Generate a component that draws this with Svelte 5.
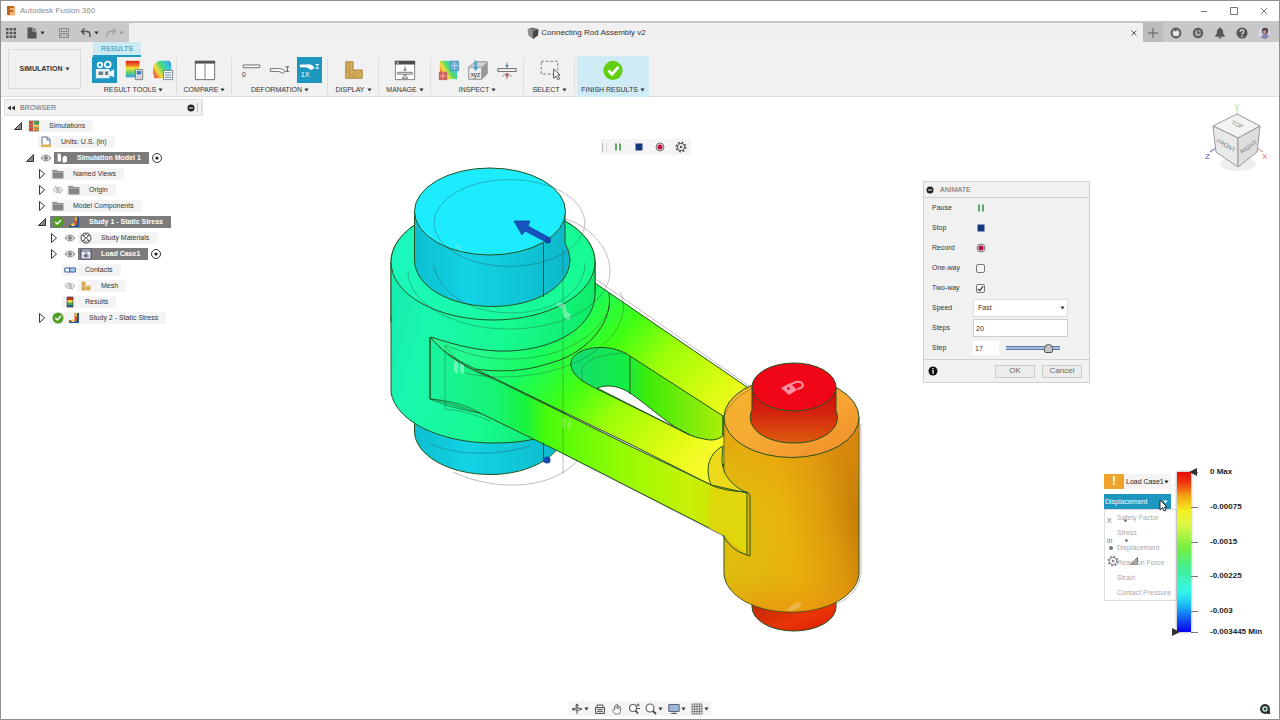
<script>
  const tree = [
    { level: 0, arrow: "open", icon: "stack", text: "Simulations" },
    { level: 1, icon: "ruler", text: "Units: U.S. (in)" },
    { level: 1, arrow: "open", eye: "on", icon: "model", text: "Simulation Model 1", active: true, radio: true },
    { level: 2, arrow: "closed", icon: "folder", text: "Named Views" },
    { level: 2, arrow: "closed", eye: "off", icon: "folder", text: "Origin" },
    { level: 2, arrow: "closed", icon: "folder", text: "Model Components" },
    { level: 2, arrow: "open", check: true, icon: "study", text: "Study 1 - Static Stress", active: true },
    { level: 3, arrow: "closed", eye: "on", icon: "material", text: "Study Materials" },
    { level: 3, arrow: "closed", eye: "on", icon: "load", text: "Load Case1", active: true, radio: true },
    { level: 3, icon: "contacts", text: "Contacts" },
    { level: 3, eye: "off", icon: "mesh", text: "Mesh" },
    { level: 3, icon: "results", text: "Results" },
    { level: 2, arrow: "closed", check: true, icon: "study", text: "Study 2 - Static Stress" }
  ];

  const groups = [
    { name: "RESULT TOOLS", tools: ["camera", "probe", "legend"], on: "camera" },
    { name: "COMPARE", tools: ["compare"] },
    { name: "DEFORMATION", tools: ["deform0", "deform", "deform1"], on: "deform1" },
    { name: "DISPLAY", tools: ["display"] },
    { name: "MANAGE", tools: ["manage"] },
    { name: "INSPECT", tools: ["inspect", "xyz", "reaction"] },
    { name: "SELECT", tools: ["select"] },
    { name: "FINISH RESULTS", tools: ["finish"], finish: true }
  ];

  const results = ["Safety Factor", "Stress", "Displacement", "Reaction Force", "Strain", "Contact Pressure"];

  const lowest = -0.003445;
  const ticks = [
    { value: 0, text: "0 Max" },
    { value: -0.00075, text: "-0.00075" },
    { value: -0.0015, text: "-0.0015" },
    { value: -0.00225, text: "-0.00225" },
    { value: -0.003, text: "-0.003" },
    { value: lowest, text: "-0.003445 Min" }
  ];

  const navTools = [
    { icon: "orbit", caret: true },
    { icon: "lookat" },
    { icon: "pan" },
    { icon: "zoom" },
    { icon: "fit", caret: true },
    { icon: "screen", caret: true },
    { icon: "gridview", caret: true }
  ];

  let playing = true;
  let oneWay = false;
  let twoWay = true;
  let speed = "Fast";
  let steps = 20;
  let step = 17;
  let result = "Displacement";

  function stop() {
    playing = false;
    step = 0;
  }
</script>

{#snippet caret()}
  <svg class="caret" viewBox="0 0 6 4" aria-hidden="true"><path d="M.5.3h5L3 3.7z" fill="currentColor" /></svg>
{/snippet}

{#snippet small(name)}
  <svg class="small" viewBox="0 0 12 12" aria-hidden="true">
    {#if name === "apps"}
      <path d="M1 1h2.600v2.600H1zm3.700 0h2.600v2.600H4.700zM8.400 1H11v2.600H8.400zM1 4.700h2.600v2.600H1zm3.700 0h2.600v2.600H4.700zm3.700 0H11v2.600H8.400zM1 8.400h2.600V11H1zm3.700 0h2.600V11H4.700zm3.700 0H11V11H8.400z" fill="#555" />
    {:else if name === "file"}
      <path d="M1.500.5h5v4h4v7h-9zM7.500.5l3 3h-3z" fill="#555" />
    {:else if name === "save"}
      <path d="M1.500 1.500h9v9h-9zM3.500 1.500v3h5v-3M3 10.500v-4h6v4M5 8.500h2" fill="none" stroke="#8c8c8c" />
    {:else if name === "undo"}
      <path d="M4.500 1.500 1.500 4.500l3 3M1.500 4.500H7q3 0 3 3.500v2" fill="none" stroke="#555" stroke-width="1.500" />
    {:else if name === "redo"}
      <path d="m7.500 1.500 3 3-3 3M10.500 4.500H5q-3 0-3 3.500v2" fill="none" stroke="#a0a0a0" stroke-width="1.300" />
    {:else if name === "cube"}
      <path d="m.5 2 5-1.500 6 1.500-5.500 2z" fill="#777" /><path d="M.5 2 6 4v8L1.500 8.500z" fill="#8b8b8b" /><path d="M11.500 2 6 4v8l5-3.500z" fill="#444" />
    {:else if name === "gear"}
      <circle cx="6" cy="6" r="4.600" fill="none" stroke="#555" stroke-width="1.800" stroke-dasharray="1.800 1.800" />
      <circle cx="6" cy="6" r="3.600" fill="none" stroke="#555" /><circle cx="6" cy="6" r="1.300" fill="#555" />
    {:else if name === "pause"}
      <path d="M4 2.500v7M8 2.500v7" stroke="#2f8f3c" stroke-width="1.500" />
    {:else if name === "stop"}
      <path d="M2.500 2.500h7v7h-7z" fill="#14387f" />
    {:else if name === "record"}
      <circle cx="6" cy="6" r="4" fill="#ddd" stroke="#777" /><circle cx="6" cy="6" r="2.500" fill="#c2083e" />
    {:else if name === "plus"}
      <path d="M6 1v10M1 6h10" stroke="#777" stroke-width="1.500" />
    {:else if name === "close"}
      <path d="m3.500 3.500 5 5m0-5-5 5" stroke="#555" />
    {:else if name === "extension"}
      <circle cx="6" cy="6" r="4.500" fill="none" stroke="#555" stroke-width="1.800" /><path d="M4 4.500h3l1.500 2-1 2H5L3.500 6z" fill="#eee" /><path d="m4 1 3 2.500-2 1z" fill="#555" />
    {:else if name === "clock"}
      <circle cx="6" cy="6" r="5.200" fill="#555" /><circle cx="6" cy="6" r="3.200" fill="#a8a8a8" /><path d="M6 3.500V6h2.500" fill="none" stroke="#444" stroke-width="1.200" />
    {:else if name === "bell"}
      <path d="M6 .5c.8 0 1 .5 1 1 2 .8 2 2.500 2.200 4.500.1 1.600.8 2.200 1.800 3v.8H1V9c1-.8 1.700-1.400 1.800-3C3 4 3 2.300 5 1.500c0-.5.2-1 1-1zM4.500 10.300h3q-.3 1.500-1.500 1.500t-1.500-1.500z" fill="#555" />
    {:else if name === "help"}
      <circle cx="6" cy="6" r="5.500" fill="#555" /><path d="M4.200 4.700c0-2.500 3.700-2.300 3.700-.2C7.900 6 6 5.800 6 7.500" fill="none" stroke="#eee" stroke-width="1.200" /><circle cx="6" cy="9.200" r=".8" fill="#eee" />
    {:else if name === "user"}
      <circle cx="6" cy="6" r="5.800" fill="#d8d5e6" /><circle cx="7" cy="4" r="3.200" fill="#554249" /><circle cx="6.500" cy="5" r="1.800" fill="#c39b91" /><path d="M3 11q1-4 4-4t4 2l-3 3z" fill="#8583a9" />
    {:else if name === "minus"}
      <circle cx="6" cy="6" r="3.500" fill="#222" /><path d="M4 6h4" stroke="#fff" />
    {:else if name === "back"}
      <path d="M6 3.500v5L2.500 6zm4 0v5L6.500 6z" fill="#333" />
    {:else if name === "info"}
      <circle cx="6" cy="6" r="4.500" fill="#111" /><path d="M6 5v3.700M6 3v1.200" stroke="#fff" stroke-width="1.300" />
    {:else if name === "open"}
      <path d="M9.500 2.500v7h-7z" fill="#888" stroke="#333" />
    {:else if name === "closed"}
      <path d="M3.500 1.500 8.500 6l-5 4.500z" fill="#fff" stroke="#333" />
    {:else if name === "on"}
      <path d="M1 6q5-6 10 0-5 6-10 0z" fill="#ddd" stroke="#888" /><circle cx="6" cy="6" r="1.800" fill="#777" />
    {:else if name === "off"}
      <path d="M1 6q5-5.500 10 0-5 5.500-10 0z" fill="#f5f5f5" stroke="#b5b5b5" /><circle cx="6" cy="6" r="1.500" fill="none" stroke="#b5b5b5" /><path d="m3 2 6 8" stroke="#b5b5b5" />
    {:else if name === "check"}
      <circle cx="6" cy="6" r="5.500" fill="#519d25" /><path d="m3.300 6 2 2 3.700-4" fill="none" stroke="#fff" stroke-width="1.500" />
    {:else if name === "radio"}
      <circle cx="6" cy="6" r="4.500" fill="#fff" stroke="#333" /><circle cx="6" cy="6" r="1.600" fill="#222" />
    {:else if name === "stack"}
      <path d="M1 1h4v3H1zm0 3.500h4v3H1z" fill="#d9482e" /><path d="M1 8h4v3H1z" fill="#d9482e" /><path d="M6 1h5v3H6z" fill="#4b9c49" /><path d="M6 4.500h5v3H6z" fill="#e7c843" /><path d="M6 8h5v3H6z" fill="#e28a37" /><path d="M1 4.200h10M1 7.700h10M1 1h10M1 11h10" stroke="#666" stroke-width=".7" />
    {:else if name === "ruler"}
      <path d="M2 1h5.500L10 3.500V10H2z" fill="#fff" stroke="#65718a" /><path d="M7 1v3h3" fill="none" stroke="#65718a" /><path d="M1 8.500h10V11H1z" fill="#d8b455" />
    {:else if name === "model"}
      <path d="M1 1h3l1.500 2v7H1zM6 5l3-2 2.500 2v5L8 11.500 6 10z" fill="#fff" stroke="#777" />
    {:else if name === "folder"}
      <path d="M.5 2h4l1 1h6v7.500H.5z" fill="#858585" /><path d="M1 4.200h10" stroke="#b4b4b4" />
    {:else if name === "study"}
      <path d="M6.500 1H11v10H1V8h5.500z" fill="#d85430" /><path d="M9 1v7.500l-2 1H1V11h10V1z" fill="#25579b" /><path d="M7 1h2v3.500H7z" fill="#e6b33c" /><path d="M3.500 7.500h3V10h-3z" fill="#f2df54" />
    {:else if name === "material"}
      <circle cx="6" cy="6" r="5" fill="#fff" stroke="#444" /><path d="m2.500 2.500 7 7m0-7-7 7" stroke="#555" stroke-width="1.200" /><path d="m6 2 2 2-2 2-2-2zm0 4 2 2-2 2-2-2z" fill="#fff" stroke="#666" stroke-width=".7" />
    {:else if name === "load"}
      <path d="M1 1h10v10H1z" fill="#eee" stroke="#455070" /><path d="M1 3h10M3 8h6M6 4v6M4.500 6.500 6 8l1.500-1.500" fill="none" stroke="#455070" />
    {:else if name === "contacts"}
      <path d="M.8 4h5v4h-5z" fill="#fff" stroke="#315fa5" /><path d="M5.800 4h5.500v4H5.800z" fill="#aed3ee" stroke="#315fa5" />
    {:else if name === "mesh"}
      <path d="M1.500 1.500h4v4h5v5h-9z" fill="#d3a84a" stroke="#f5e5ba" stroke-dasharray="1 1" /><path d="M1.500 6h9M6 5.500v5" stroke="#f2ddb1" stroke-width=".7" />
    {:else if name === "results"}
      <path d="M3 1h6v3H3z" fill="#c92b20" /><path d="M3 4h6v2.500H3z" fill="#f3d43c" /><path d="M3 6.500h6V9H3z" fill="#45a942" /><path d="M3 9h6v2H3z" fill="#2b57ad" /><path d="M3 1h6v10H3z" fill="none" stroke="#444" stroke-width=".7" />
    {:else if name === "orbit"}
      <path d="M6 1v10M1 6q5-3 10 0-5 3-8 .5" fill="none" stroke="#555" /><path d="M4 3h4L6 .5zM1 5l3 .5L2 8z" fill="#555" />
    {:else if name === "lookat"}
      <path d="M1.500 4.500h9v6h-9z" fill="#ddd" stroke="#555" /><path d="M3 4V2h6v2M3.500 6.500h5m-5 2h5" fill="none" stroke="#555" />
    {:else if name === "pan"}
      <path d="M4 11 1.500 7.500q0-1.500 2-.5V3q1-1 1.500 0V1.700q1-1 1.500 0V3q1-1 1.500 0v1q1.500-.8 1.500.3V8L8.500 11zM5 3v3m1.500-3v3M8 3.500v3" fill="#fff" stroke="#666" stroke-width=".8" />
    {:else if name === "zoom"}
      <circle cx="5" cy="5" r="3.500" fill="#fff" stroke="#666" stroke-width="1.200" /><path d="m7.500 7.500 2.500 3" stroke="#444" stroke-width="1.500" /><path d="M10 .5v3M8.500 2h3M9 5.500h3" stroke="#555" />
    {:else if name === "fit"}
      <circle cx="5" cy="5" r="4" fill="#fff" stroke="#666" stroke-width="1.200" /><path d="m8 8 3 3" stroke="#444" stroke-width="1.800" />
    {:else if name === "screen"}
      <path d="M.8 1.500h10.400v7H.8z" fill="#9cb6d8" stroke="#667" /><path d="M3 10.500h6M6 8.500v2" stroke="#667" />
    {:else if name === "gridview"}
      <path d="M1 1h10v10H1zM3.500 1v10M6 1v10M8.500 1v10M1 3.500h10M1 6h10M1 8.500h10" fill="#eee" stroke="#777" stroke-width=".9" />
    {/if}
  </svg>
{/snippet}

{#snippet tool(name)}
  <svg class="tool-icon" viewBox="0 0 24 24" aria-hidden="true">
    {#if name === "camera"}
      <circle cx="6.500" cy="6.500" r="2.500" fill="none" stroke="#fff" stroke-width="1.800" /><circle cx="15" cy="6" r="3.200" fill="none" stroke="#fff" stroke-width="1.800" />
      <path d="M2 11h15v3l5-3v9l-5-2v3H2z" fill="#e9f3f6" /><path d="M5 13.500h5v4H5zm7 0h3.500v4H12z" fill="#6c7e84" />
    {:else if name === "probe"}
      <rect x="3" y="2" width="15" height="18" fill="url(#rainbow)" />
      <path d="M13.500 11.500h8v11h-8z" fill="#eee" stroke="#777" /><path d="M15 13h5v4h-5z" fill="#397ac0" /><path d="M15 19h5m-5 2h5" stroke="#888" stroke-dasharray="1 1" />
    {:else if name === "legend"}
      <path d="M1 15Q0 5 8 2h11l2 3v10q-5 2-9 6H3z" fill="url(#patch)" /><path d="M12.500 12.500h10v10h-10z" fill="#fff" stroke="#71818d" /><path d="M14 15h7m-7 2.500h7M14 20h7" stroke="#5f83a0" />
    {:else if name === "compare"}
      <path d="M1.500 2.500h21v20h-21z" fill="#fff" stroke="#666" /><path d="M1 2h22v3H1z" fill="#555" /><path d="M12 4v18" stroke="#777" />
    {:else if name === "deform0"}
      <path d="M3.500 6.500h18v3h-18z" fill="#fff" stroke="#666" /><text x="2" y="20" font-size="8" fill="#444">0</text>
    {:else if name === "deform"}
      <path d="M1.500 10.500h6q7-1 10 3l-3 2q-2-2-6-2h-7z" fill="#fff" stroke="#666" /><path d="M18 8.500h4m-4 5h4m-2-5v5" stroke="#555" />
    {:else if name === "deform1"}
      <path d="M2 6h7q7-1 9 4l-4 2q-3-3-6-3H2z" fill="#fff" /><path d="M19 6h4m-4 4h4m-2-4v4" stroke="#fff" /><text x="3" y="20" font-size="8" fill="#fff">1X</text>
    {:else if name === "display"}
      <path d="M3 3h8v9h10v9H3z" fill="#d4ac5b" stroke="#a88137" /><path d="M3 12h9v9M7 3v9m0 0v9M3 12l9 9 9-9" fill="none" stroke="#b58c40" stroke-width=".7" />
    {:else if name === "manage"}
      <path d="M1.500 2.500h21v20h-21z" fill="#fff" stroke="#777" /><path d="M1 2h22v4H1z" fill="#4d4d4d" /><path d="M3 3h2v2H3z" fill="#ccc" /><path d="M4 14.500h16v2H4z" fill="#fff" stroke="#666" /><path d="M12 8v5m-1.500-2 1.500 2 1.500-2M12 17l-3 4h6z" fill="none" stroke="#666" />
    {:else if name === "inspect"}
      <path d="M2 2h19v20H2z" fill="url(#patch)" /><path d="M13.500 2.500h9v10h-9z" fill="#69b0d5" stroke="#4e91bb" /><path d="M1.500 14.500h8v8h-8z" fill="#da5c58" stroke="#a95b58" /><path d="M18 2v10M13.500 7h9M5.500 14.500v8M1.500 18.500h8" stroke="#fff" stroke-width=".5" />
    {:else if name === "xyz"}
      <path d="m2 9 7-6h13v13l-6 6H2z" fill="#d3d3d3" stroke="#888" /><path d="M2 9h14v13H2z" fill="#eee" stroke="#999" /><path d="m16 9 6-6v13l-6 6z" fill="#999" /><path d="M8 2h3v7h2l-3.500 4L6 9h2z" fill="#55a8ca" /><text x="4" y="20" font-size="7" fill="#333">xyz</text>
    {:else if name === "reaction"}
      <path d="M2 10.500h20v3H2z" fill="#fff" stroke="#555" /><path d="M12 4v5" stroke="#477f99" /><path d="m10 6.500 2 3 2-3z" fill="#477f99" /><path d="M12 22v-5m-5 2q5-6 10 0" fill="none" stroke="#777" /><path d="m10 19 2-4 2 4z" fill="#c34b51" />
    {:else if name === "select"}
      <path d="M2.500 2.500h18v14h-18z" fill="none" stroke="#528267" stroke-dasharray="3 2" /><path d="M16 11v10l2.500-2.500 2 4 2-1-2-4H23z" fill="#fff" stroke="#444" />
    {:else if name === "finish"}
      <circle cx="12" cy="12.500" r="10.500" fill="#62cf12" /><path d="m7 12.500 4 4 7-8" fill="none" stroke="#fff" stroke-width="3" />
    {/if}
  </svg>
{/snippet}

<div class="app">
  <header class="titlebar">
    <svg class="logo" viewBox="0 0 10 10" aria-hidden="true"><path d="M2 .5h7v9H2z" fill="#f4ae76" /><path d="M1 0h7v2H4v2h3v2H4v3H1z" fill="#b9651c" /></svg>
    <span>Autodesk Fusion 360</span>
    <div class="window-buttons">
      <button aria-label="Minimize"><svg class="small" viewBox="0 0 12 12"><path d="M3 6.500h6" stroke="#777" /></svg></button>
      <button aria-label="Maximize"><svg class="small" viewBox="0 0 12 12"><path d="M2.500 2.500h7v7h-7z" fill="none" stroke="#777" /></svg></button>
      <button aria-label="Close"><svg class="small" viewBox="0 0 12 12"><path d="m3 3 6 6m0-6-6 6" stroke="#777" /></svg></button>
    </div>
  </header>

  <div class="tabbar">
    <div class="quick">
      <button aria-label="Data panel">{@render small("apps")}</button>
      <button aria-label="File">{@render small("file")}{@render caret()}</button>
      <button aria-label="Save">{@render small("save")}</button>
      <button aria-label="Undo">{@render small("undo")}{@render caret()}</button>
      <button aria-label="Redo" class="faded">{@render small("redo")}{@render caret()}</button>
    </div>
    <div class="document">
      <div class="document-name">{@render small("cube")}<span>Connecting Rod Assembly v2</span></div>
      <button aria-label="Close document">{@render small("close")}</button>
    </div>
    <div class="account">
      <button class="new" aria-label="New document">{@render small("plus")}</button>
      <button aria-label="Extensions">{@render small("extension")}</button>
      <button aria-label="Job status">{@render small("clock")}</button>
      <button aria-label="Notifications">{@render small("bell")}</button>
      <button aria-label="Help">{@render small("help")}</button>
      <button aria-label="Profile">{@render small("user")}</button>
    </div>
  </div>

  <nav class="ribbon">
    <button class="workspace">SIMULATION {@render caret()}</button>
    {#each groups as group, index}
      <div class="group" class:finish={group.finish}>
        {#if index === 0}
          <button class="results-tab">RESULTS</button>
        {/if}
        <div class="tools">
          {#each group.tools as name}
            <button class:on={group.on === name} aria-label={name}>{@render tool(name)}</button>
          {/each}
        </div>
        <button class="group-name">{group.name} {@render caret()}</button>
      </div>
    {/each}
  </nav>

  <main>
    <svg class="model" viewBox="0 97 1280 623" role="img" aria-label="Connecting rod displacement">
      <defs>
        <linearGradient id="rainbow" x1="0" y1="0" x2="0" y2="1">
          <stop offset="0" stop-color="#d91e18" /><stop offset=".25" stop-color="#ef6b29" /><stop offset=".45" stop-color="#f8e43b" /><stop offset=".7" stop-color="#5fd46d" /><stop offset="1" stop-color="#3d9be0" />
        </linearGradient>
        <linearGradient id="patch" x1="0" y1=".8" x2="1" y2=".2">
          <stop offset="0" stop-color="#e84435" /><stop offset=".3" stop-color="#f2de3d" /><stop offset=".55" stop-color="#52d96b" /><stop offset=".8" stop-color="#36cbd8" /><stop offset="1" stop-color="#4198cf" />
        </linearGradient>
        <linearGradient id="body" gradientUnits="userSpaceOnUse" x1="391" y1="300" x2="600" y2="360">
          <stop offset="0" stop-color="#16edb0" /><stop offset=".2" stop-color="#19f7ae" /><stop offset=".55" stop-color="#16fa91" /><stop offset="1" stop-color="#0ee85c" />
        </linearGradient>
        <linearGradient id="ring" gradientUnits="userSpaceOnUse" x1="391" y1="230" x2="595" y2="300">
          <stop offset="0" stop-color="#1cf8c0" /><stop offset="1" stop-color="#16fc8d" />
        </linearGradient>
        <linearGradient id="pin" gradientUnits="userSpaceOnUse" x1="414" y1="0" x2="570" y2="0">
          <stop offset="0" stop-color="#0cbfd1" /><stop offset=".35" stop-color="#12d3e4" /><stop offset="1" stop-color="#0cb8c9" />
        </linearGradient>
        <linearGradient id="web" gradientUnits="userSpaceOnUse" x1="500" y1="326" x2="680" y2="484">
          <stop offset="0" stop-color="#23fb91" /><stop offset=".2" stop-color="#18fc62" /><stop offset=".4" stop-color="#3dff14" /><stop offset=".6" stop-color="#9cff08" /><stop offset=".85" stop-color="#dcfc10" /><stop offset="1" stop-color="#f6fa28" />
        </linearGradient>
        <linearGradient id="front" gradientUnits="userSpaceOnUse" x1="430" y1="0" x2="750" y2="0">
          <stop offset="0" stop-color="#18f49f" /><stop offset=".2" stop-color="#16f375" /><stop offset=".3" stop-color="#16f43e" /><stop offset=".36" stop-color="#47fb0b" /><stop offset=".6" stop-color="#93fc02" /><stop offset=".8" stop-color="#c6f206" /><stop offset="1" stop-color="#dfd506" />
        </linearGradient>
        <linearGradient id="wall" gradientUnits="userSpaceOnUse" x1="571" y1="0" x2="723" y2="0">
          <stop offset="0" stop-color="#14dc73" /><stop offset=".35" stop-color="#13ed46" /><stop offset=".5" stop-color="#3ceb09" /><stop offset="1" stop-color="#abee08" />
        </linearGradient>
        <linearGradient id="barrel" gradientUnits="userSpaceOnUse" x1="724" y1="560" x2="859" y2="530">
          <stop offset="0" stop-color="#dcc20c" /><stop offset=".5" stop-color="#e8b30b" /><stop offset=".8" stop-color="#dc9a0c" /><stop offset="1" stop-color="#c97d08" />
        </linearGradient>
        <linearGradient id="barrel-shade" x1="0" y1="0" x2="0" y2="1">
          <stop offset="0" stop-color="#e88914" stop-opacity=".6" /><stop offset=".5" stop-color="#e6b010" stop-opacity="0" /><stop offset=".8" stop-color="#e89410" stop-opacity=".1" /><stop offset="1" stop-color="#ec8610" stop-opacity=".6" />
        </linearGradient>
        <linearGradient id="collar" x1="0" y1="0" x2="1" y2="1">
          <stop offset="0" stop-color="#f3b52a" /><stop offset=".5" stop-color="#f6aa33" /><stop offset="1" stop-color="#f08b2b" />
        </linearGradient>
        <linearGradient id="redpin" x1="0" y1="0" x2="0" y2="1">
          <stop offset="0" stop-color="#cf0810" /><stop offset=".45" stop-color="#d4220e" /><stop offset="1" stop-color="#dc5c0d" />
        </linearGradient>
        <linearGradient id="redfoot" x1="0" y1="0" x2="1" y2="1">
          <stop offset="0" stop-color="#bd2708" /><stop offset=".6" stop-color="#ea3507" /><stop offset="1" stop-color="#d81505" />
        </linearGradient>
      </defs>

      <g class="edge">
        <!-- large pin, lower end -->
        <path d="M414.500 422v9c0 24 34 43.500 75.500 43.500 28 0 53-9 66-24v-30z" fill="url(#pin)" />
        <!-- large eye -->
        <path d="M391 262v130c4 29 49 51 102 51 15 0 29-1 42-4l60-50V262c0-32-46-58-102-58s-102 26-102 58z" fill="url(#body)" />
        <!-- web between the eyes -->
        <path d="M595 283 747 387 760 420 723 465 747 492 711 485 630 444 475 369C446 355 437 346 430 337c28 7 55 14 75 14 52-1 92-24 90-68z" fill="url(#web)" />
        <path d="M430 337c24 27 45 34 65 42l133 66 83 40c12 6 24 7 36 8v62l-24-20-163-83-80-39c-17-4-32-12-50-14z" fill="url(#front)" />
        <path d="M430 399c17 1 38 6 50 14-17-3-34-7-50-14z" fill="#10cf78" opacity=".6" />
        <path d="M475 369c20 3 49 3 72-5 35-8 67-38 62-71" fill="none" />
        <!-- slot -->
        <path d="M571 366c-2-11 13-19 31-18.500 11 .5 19 2.500 28 8.500l93 60v20q-8 6-19 3-7-1-14-4l-93-46c-14-7-24-13-26-23z" fill="url(#wall)" />
        <path d="M597 388c11-4 22-2 33 5 22 15 39 33 60 42z" fill="#fff" />
        <path d="M630 356v38M723 415v21" />
        <!-- large eye, raised boss -->
        <path d="M391 262c0 32 46 58 102 58s102-26 102-58v34c-3 32-41 56-90 56-27-1-53-6-75-15l-39-20z" fill="url(#body)" stroke="none" />
        <path d="M391 262v60" />
        <path d="M431 337c27 9 52 15 78 14 48-2 87-25 86-59v-30" fill="none" />
        <path d="M430 337v62" />
        <ellipse cx="493" cy="262" rx="102" ry="58" fill="url(#ring)" />
        <path d="M414.500 212v48c0 26 35 46.500 78 46.500S570 286 570 260q0-8-5-17v-31z" fill="url(#pin)" />
        <ellipse cx="490" cy="211.500" rx="75.500" ry="43.500" fill="#1cecfd" />
        <path d="M543.500 243v54M543.500 443v19" stroke="#084d70" />

        <!-- small pin and eye -->
        <path d="M752 600v7a42 24 0 0 0 84 0v-7z" fill="url(#redfoot)" />
        <path d="M724 417v157c2 22 31 38 67 38s66-16 68-38V417z" fill="url(#barrel)" />
        <path d="M724 417v157c2 22 31 38 67 38s66-16 68-38V417z" fill="url(#barrel-shade)" stroke="none" />
        <ellipse cx="791.500" cy="417.500" rx="67.500" ry="40" fill="url(#collar)" />
        <path d="M752 387v23c-8 17 12 33 42 33s49-16 42-32v-24z" fill="url(#redpin)" />
        <ellipse cx="794" cy="387" rx="42" ry="24" fill="#f00617" />
        <path d="M722 446v14c0 15 10 26 25 33v62l-24-20-14-7 2-43z" fill="#dfd70b" stroke="none" />
        <path d="M723 446c-17 9-17 26-12 39l36 8c-18-9-25-20-25-35z" fill="#ecd91a" />
        <path d="M711 485q12 6 36 7M747 492v63q-17-5-24-20M747 492l3 3v61l-3-1" fill="none" />
      </g>

      <!-- undeformed outline -->
      <g class="ghost">
        <ellipse cx="509.500" cy="223" rx="75.500" ry="43.500" />
        <path d="M408 271c0 32 45 58 101 58s101-26 101-58c0-25-24-47-45-52" />
        <path d="M434 266c5 27 36 47 77 47 45 0 74-23 74-50M563 249v225M445 345v64q24 2 45 12M445 345c25 10 40 14 65 14 48 0 88-20 100-53M465 373c35 8 75 3 102-7 45-17 65-50 53-74" />
        <path d="M430 444c30 12 65 12 100 2M453 472c41 19 96 19 124-11" />
        <path d="m597 280 152 106M562 453l163 84M445 345c11 17 25 25 52 36l135 66M582 382v-14q8-14 45-15M723 418q8-19 28-29M861 424v150q-2 19-24 30" />
      </g>

      <g fill="#fff" opacity=".5">
        <path d="m557 302 8 2 2 8 4 2-2 7-6-5-1-8-5-2zM454 360l4 2v12l-4-3zm6 3 4 2v9l-4-2z" opacity=".7" />
        <path d="m450 238 5 3v6l7 6v-7l-3-1" opacity=".25" />
        <path d="m562 417 3 2v10l-3-2zm5 2 4 2v9h-4z" opacity=".35" />
        <path d="m786 610 9-7 7-1-3 6-8 3z" opacity=".5" />
      </g>
      <!-- fixed constraint lock -->
      <path d="m781 388 9-5 7 7-8 5z" fill="#ff8fa0" />
      <path d="m791 384 5-2q6-1 7 3 0 3-6 4" fill="none" stroke="#ff8fa0" stroke-width="2" />
      <circle cx="788.500" cy="388.500" r="1.200" fill="#b8001a" />

      <path d="m514 221 16 0-2 5 22 12-2 5-23-12-3 4z" fill="#1752bd" stroke="#103d91" stroke-width=".7" />
      <ellipse cx="548" cy="240.500" rx="3" ry="3" fill="#1245a8" /><circle cx="547" cy="460" r="3.500" fill="#1747b0" />
    </svg>

    <aside class="browser">
      <div class="browser-head">
        <button aria-label="Collapse browser">{@render small("back")}</button>
        <span>BROWSER</span>
        <button aria-label="Browser options">{@render small("minus")}</button>
        <i class="grip"></i>
      </div>
      <ul>
        {#each tree as row}
          <li class="level{row.level}">
            <span class="slot">{#if row.arrow}{@render small(row.arrow)}{/if}</span>
            {#if row.eye}<span class="slot">{@render small(row.eye)}</span>{/if}
            <span class="node" class:active={row.active}>
              {#if row.check}<span class="slot">{@render small("check")}</span>{/if}
              <span class="slot">{@render small(row.icon)}</span>
              <span class="node-text">{row.text}</span>
            </span>
            {#if row.radio}{@render small("radio")}{/if}
          </li>
        {/each}
      </ul>
    </aside>

    <div class="playback">
      <i class="grip"></i>
      <button aria-label="Pause" on:click={() => (playing = !playing)}>{@render small("pause")}</button>
      <button aria-label="Stop" on:click={stop}>{@render small("stop")}</button>
      <button aria-label="Record">{@render small("record")}</button>
      <button aria-label="Settings">{@render small("gear")}</button>
    </div>

    <svg class="viewcube" viewBox="1200 97 75 85" role="img" aria-label="View cube">
      <ellipse cx="1238" cy="164" rx="18" ry="7" fill="#ddd" opacity=".5" />
      <path d="M1237 106v9" stroke="#a5e6a5" /><path d="m1216 148-6 4" stroke="#5555b5" /><path d="m1257 148 6 4" stroke="#d88" />
      <g stroke="#999" stroke-linejoin="round">
        <path d="m1237 114 23 12-22 12-25-12z" fill="#f3f3f3" />
        <path d="m1213 126 25 12v29l-22-15z" fill="#e9e9e9" />
        <path d="m1260 126-22 12v29l19-15z" fill="#dedede" />
      </g>
      <text class="face" transform="translate(1231 124) rotate(24)">TOP</text>
      <text class="face" transform="translate(1216 142) rotate(30)">FRONT</text>
      <text class="face" transform="translate(1242 154) rotate(-34)">RIGHT</text>
      <text class="axis" x="1205" y="159" fill="#5555c0">Z</text>
      <text class="axis" x="1262" y="159" fill="#d66">X</text>
      <text class="axis" x="1234" y="109" fill="#a5e6a5">Y</text>
    </svg>

    <section class="animate">
      <h2>{@render small("minus")}ANIMATE</h2>
      <div class="fields">
        <label for="pause">Pause</label>
        <button id="pause" on:click={() => (playing = !playing)}>{@render small("pause")}</button>
        <label for="stop">Stop</label>
        <button id="stop" on:click={stop}>{@render small("stop")}</button>
        <label for="record">Record</label>
        <button id="record">{@render small("record")}</button>
        <label for="one-way">One-way</label>
        <input id="one-way" type="checkbox" bind:checked={oneWay} />
        <label for="two-way">Two-way</label>
        <input id="two-way" type="checkbox" bind:checked={twoWay} />
        <label for="speed">Speed</label>
        <div class="select">
          <select id="speed" bind:value={speed}>
            <option>Slow</option>
            <option>Normal</option>
            <option>Fast</option>
          </select>
          {@render caret()}
        </div>
        <label for="steps">Steps</label>
        <input id="steps" class="steps" bind:value={steps} />
        <label for="step">Step</label>
        <div class="step">
          <input id="step" bind:value={step} />
          <input type="range" min="0" max={steps} bind:value={step} aria-label="Step slider" />
        </div>
      </div>
      <footer>
        {@render small("info")}
        <button>OK</button>
        <button>Cancel</button>
      </footer>
    </section>

    <div class="legend">
      <div class="legend-left">
        <div class="case">
          <span class="warn">!</span>
          <select aria-label="Load case"><option>Load Case1</option></select>
          {@render caret()}
        </div>
        <div class="quantity">
          <select bind:value={result} aria-label="Result">
            {#each results as name}
              <option>{name}</option>
            {/each}
          </select>
          {@render caret()}
          <svg class="cursor" viewBox="0 0 9 13" aria-hidden="true"><path d="M1 1v10l2.500-2.500L5 12l2-1-1.500-3H8z" fill="#fff" stroke="#222" /></svg>
        </div>
        <div class="options">
          <div class="under">
            <div><select aria-label="Direction"><option>X</option></select>{@render caret()}</div>
            <div><select aria-label="Unit"><option>in</option></select>{@render caret()}</div>
            <div>{@render small("gear")}{@render small("open")}</div>
          </div>
          <ul>
            {#each results as name}
              <li class:chosen={name === result}>{name}</li>
            {/each}
          </ul>
        </div>
      </div>
      <div class="scale">
        <div class="bar"></div>
        {#each ticks as tick}
          <span class="tick" style="top: {(tick.value / lowest) * 100}%">{tick.text}</span>
        {/each}
        <i class="max"></i>
        <i class="min"></i>
      </div>
    </div>

    <div class="navbar">
      {#each navTools as item}
        <button aria-label={item.icon}>{@render small(item.icon)}{#if item.caret}{@render caret()}{/if}</button>
      {/each}
    </div>
    <button class="assistant" aria-label="Assistant">
      <svg class="small" viewBox="0 0 12 12"><circle cx="6" cy="6" r="5" fill="#333" /><circle cx="6" cy="6" r="2" fill="none" stroke="#bdf0e2" stroke-width="1.300" /><path d="M8 8h3v3H8z" fill="#333" /></svg>
    </button>
  </main>
</div>

<style>
  :global(body) {
    background: #fff;
  }
  .app {
    display: flex;
    flex-direction: column;
    min-height: 100vh;
    position: relative;
    font-family: "Liberation Sans", Arial, sans-serif;
    font-size: 7px;
    line-height: 10px;
    color: #333;
  }
  .app::after {
    content: "";
    position: absolute;
    inset: 0;
    border: 1px solid #909090;
    pointer-events: none;
  }
  button,
  select,
  input {
    box-sizing: border-box;
    margin: 0;
    padding: 0;
    border: none;
    background: none;
    font: inherit;
    color: inherit;
  }
  button {
    display: flex;
    align-items: center;
    justify-content: center;
  }
  select {
    appearance: none;
  }
  ul {
    margin: 0;
    padding: 0;
    list-style: none;
  }
  svg {
    flex: none;
  }
  .small {
    width: 12px;
    height: 12px;
  }
  .caret {
    width: 5px;
    height: 4px;
    margin-left: 2px;
  }
  .grip {
    width: 3px;
    height: 9px;
    border-left: 1px solid #bbb;
    border-right: 1px solid #ddd;
  }

  .titlebar {
    display: flex;
    align-items: center;
    height: 21px;
    padding: 0 10px 0 6px;
    font-size: 8px;
    color: #8c8c8c;
  }
  .logo {
    width: 10px;
    height: 10px;
    margin-right: 4px;
  }
  .window-buttons {
    display: flex;
    gap: 18px;
    margin-left: auto;
  }

  .tabbar {
    display: flex;
    height: 19px;
    border-top: 2px solid #c6c6c6;
    background: #f0f0f0;
  }
  .quick {
    display: flex;
    align-items: center;
    gap: 9px;
    width: 124px;
    padding-left: 5px;
    background: #c8c8c8;
  }
  .quick button:nth-child(3) {
    margin: 0 1px 0 4px;
  }
  .quick .faded {
    margin-left: -3px;
    color: #999;
  }
  .document {
    flex: 1;
    display: flex;
    align-items: center;
  }
  .document-name {
    flex: 1;
    display: flex;
    align-items: center;
    justify-content: center;
    gap: 2px;
    padding-right: 84px;
    font-size: 8px;
  }
  .document > button {
    margin-right: 3px;
  }
  .account {
    display: flex;
    align-items: center;
    gap: 10px;
    padding-right: 10px;
    background: #c8c8c8;
  }
  .account .new {
    width: 20px;
    height: 19px;
    margin-right: -3px;
    background: #bcbcbc;
  }

  .ribbon {
    display: grid;
    grid-template-columns: 90px 87px 55px 96px 51px 52px 93px 51px 74px 1fr;
    height: 54px;
    border-bottom: 1px solid #ddd;
    background: #f1f1f1;
  }
  .workspace {
    height: 40px;
    margin: 7px 9px 0 8px;
    border: 1px solid #dcdcdc;
    font-weight: bold;
  }
  .group {
    position: relative;
    display: flex;
    flex-direction: column;
    align-items: center;
    padding-top: 15px;
  }
  .group:not(.finish)::after {
    content: "";
    position: absolute;
    right: 0;
    top: 16px;
    bottom: 2px;
    border-right: 1px solid #ddd;
  }
  .group.finish {
    margin: 14px 0 0 2px;
    padding-top: 1px;
    background: #cfebf5;
  }
  .results-tab {
    position: absolute;
    top: 0;
    left: 3px;
    width: 48px;
    height: 15px;
    border-bottom: 2px solid #1b9bc6;
    background: #ccebf5;
    color: #168cb4;
  }
  .tools {
    display: flex;
    gap: 4px;
  }
  .tools button {
    width: 25px;
    height: 26px;
  }
  .tools .on {
    background: #1d96c0;
  }
  .tool-icon {
    width: 22px;
    height: 22px;
  }
  .group-name {
    height: 14px;
    white-space: nowrap;
  }

  main {
    flex: 1;
    position: relative;
    min-height: 560px;
    overflow: hidden;
  }
  .model {
    position: absolute;
    inset: 0;
    width: 100%;
    height: 100%;
  }
  .edge {
    stroke: #25521f;
    stroke-width: 1;
  }
  .ghost {
    fill: none;
    stroke: #333;
    stroke-width: 0.7;
    opacity: 0.45;
  }

  .browser {
    position: absolute;
    top: 2px;
    left: 4px;
  }
  .browser-head {
    display: flex;
    align-items: center;
    width: 199px;
    height: 17px;
    box-sizing: border-box;
    border: 1px solid #e0e0e0;
    background: #f2f2f2;
    color: #666;
  }
  .browser-head span {
    flex: 1;
    padding-left: 3px;
  }
  .browser ul {
    padding: 2px 0 0 6px;
  }
  li {
    display: flex;
    align-items: center;
  }
  .browser li {
    height: 16px;
  }
  .level1 {
    padding-left: 12px;
  }
  .level2 {
    padding-left: 24px;
  }
  .level3 {
    padding-left: 36px;
  }
  .slot {
    display: flex;
    justify-content: center;
    width: 16px;
  }
  .node {
    display: flex;
    align-items: center;
    height: 12px;
    margin-right: 2px;
    background: #f4f4f4;
  }
  .node-text {
    padding: 0 8px 0 7px;
  }
  .node.active {
    background: #7c7c7c;
    color: #fff;
    font-weight: bold;
  }

  .playback {
    position: absolute;
    top: 42px;
    left: 50%;
    display: flex;
    align-items: center;
    gap: 9px;
    height: 16px;
    padding: 0 4px 0 1px;
    margin-left: -39px;
    background: #f4f4f4;
  }
  .playback .grip {
    margin-right: -4px;
  }

  .viewcube {
    position: absolute;
    top: 0;
    right: 5px;
    width: 75px;
    height: 85px;
  }
  .face {
    font-size: 6px;
    fill: #777;
  }
  .axis {
    font-size: 8px;
  }

  .animate {
    position: absolute;
    top: 84px;
    right: 190px;
    width: 167px;
    box-sizing: border-box;
    border: 1px solid #d0d0d0;
    background: #f1f1f1;
  }
  h2 {
    display: flex;
    align-items: center;
    gap: 4px;
    height: 15px;
    margin: 0;
    border-bottom: 1px solid #d0d0d0;
    font-size: 7px;
    font-weight: normal;
    color: #666;
  }
  .fields {
    display: grid;
    grid-template-columns: 41px 1fr;
    grid-auto-rows: 20px;
    align-items: center;
    padding: 0 21px 0 8px;
  }
  .fields button {
    justify-self: start;
    margin-left: 2px;
  }
  .fields input[type="checkbox"] {
    appearance: none;
    display: grid;
    width: 9px;
    height: 9px;
    margin-left: 3px;
    border: 1px solid #777;
    border-radius: 2px;
    background: #f5f5f5;
  }
  .fields input[type="checkbox"]:checked::before {
    content: "";
    width: 2px;
    height: 5px;
    margin-left: 2px;
    border: solid #222;
    border-width: 0 1px 1px 0;
    transform: rotate(40deg);
  }
  .select {
    display: flex;
    align-items: center;
    height: 18px;
    padding-right: 2px;
    border: 1px solid #ddd;
    box-sizing: border-box;
    background: #fff;
  }
  .select select {
    flex: 1;
    padding-left: 4px;
  }
  .steps {
    width: 100%;
    height: 18px;
    padding-left: 2px;
    border: 1px solid #ccc;
    background: #fff;
  }
  .step {
    display: flex;
    align-items: center;
    gap: 7px;
  }
  .step input:first-child {
    width: 26px;
    height: 14px;
    padding-left: 2px;
    background: #fff;
  }
  .step input[type="range"] {
    flex: 1;
    appearance: none;
    width: 0;
    height: 4px;
    margin-right: 8px;
    background: #a4bce6;
    border: solid #66789a;
    border-width: 1px 0;
  }
  .step input[type="range"]::-webkit-slider-thumb {
    appearance: none;
    width: 9px;
    height: 9px;
    border: 1px solid #555;
    border-radius: 5px 5px 2px 2px;
    background: #c5c5c5;
  }
  footer {
    display: flex;
    align-items: center;
    gap: 7px;
    height: 22px;
    padding: 0 7px 0 3px;
    border-top: 1px solid #d0d0d0;
    margin-top: 1px;
    font-size: 8px;
  }
  footer svg {
    margin-right: auto;
  }
  footer button {
    width: 40px;
    height: 13px;
    border: 1px solid #ccc;
    background: #ececec;
    color: #666;
  }

  .legend {
    position: absolute;
    right: 0;
    bottom: 88px;
    display: flex;
    gap: 6px;
  }
  .legend-left {
    width: 67px;
    padding-top: 2px;
  }
  .case,
  .quantity {
    display: flex;
    align-items: center;
    height: 15px;
    background: #f4f4f4;
  }
  .case {
    margin-bottom: 5px;
    color: #222;
  }
  .case .caret {
    margin-left: 0;
  }
  .warn {
    width: 20px;
    margin-right: 2px;
    background: #eea32d;
    color: #fff;
    font-size: 12px;
    font-weight: bold;
    line-height: 15px;
    text-align: center;
  }
  .quantity {
    position: relative;
    padding: 0 3px 0 1px;
    background: #1d96c0;
    color: #fff;
  }
  .quantity select {
    flex: 1;
  }
  .cursor {
    position: absolute;
    left: 55px;
    top: 5px;
    width: 9px;
    height: 13px;
    z-index: 1;
  }
  .options {
    position: relative;
  }
  .options ul {
    width: 73px;
    box-sizing: border-box;
    border: 1px solid #ddd;
    background: rgba(255, 255, 255, 0.3);
    position: relative;
    color: #aaa;
  }
  .options li {
    height: 15px;
    padding-left: 12px;
    white-space: nowrap;
  }
  .options .chosen::before {
    content: "";
    width: 4px;
    height: 4px;
    margin: 0 4px 0 -8px;
    border-radius: 50%;
    background: #777;
  }
  .under {
    position: absolute;
    inset: 0;
    padding: 2px 0 0 3px;
  }
  .under div {
    display: flex;
    align-items: center;
    gap: 9px;
    height: 20px;
  }

  .scale {
    position: relative;
    width: 103px;
    height: 160px;
  }
  .bar {
    width: 14px;
    height: 160px;
    background: linear-gradient(#e80d0b, #ef380c 7%, #f4a414 15%, #f5ee1c 24%, #e1f744 32%, #71ef44 48%, #45ef93 60%, #35f5ed 75%, #1bbdf5 83%, #1257ee 92%, #0900f0);
    box-shadow: 0 0 3px #999;
  }
  .tick {
    position: absolute;
    left: 33px;
    margin-top: -5px;
    font-size: 8px;
    font-weight: bold;
    color: #222;
    white-space: nowrap;
  }
  .tick::before {
    content: "";
    position: absolute;
    top: 5px;
    left: -19px;
    width: 7px;
    border-top: 1px solid #777;
  }
  .max,
  .min {
    position: absolute;
    border: solid transparent;
    border-width: 4px 0;
  }
  .max {
    top: -4px;
    left: 12px;
    border-right: 8px solid #333;
  }
  .min {
    bottom: -4px;
    left: -5px;
    border-left: 8px solid #333;
  }

  .navbar {
    position: absolute;
    bottom: 4px;
    left: 50%;
    display: flex;
    align-items: center;
    gap: 5px;
    height: 15px;
    padding: 0 2px;
    transform: translateX(-50%);
    background: #f4f4f4;
  }
  .navbar .caret {
    margin-left: 1px;
  }
  .assistant {
    position: absolute;
    right: 9px;
    bottom: 5px;
  }
</style>
